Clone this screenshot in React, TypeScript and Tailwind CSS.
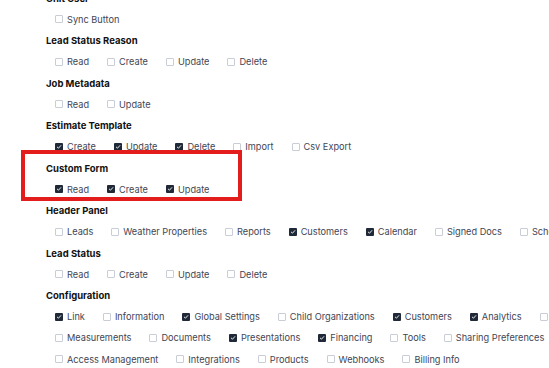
import React from "react";

type Item = [string, boolean];

const sections: { title: string; rows: Item[][] }[] = [
  { title: "Unit User", rows: [[["Sync Button", false]]] },
  {
    title: "Lead Status Reason",
    rows: [[["Read", false], ["Create", false], ["Update", false], ["Delete", false]]],
  },
  { title: "Job Metadata", rows: [[["Read", false], ["Update", false]]] },
  {
    title: "Estimate Template",
    rows: [[["Create", true], ["Update", true], ["Delete", true], ["Import", false], ["Csv Export", false]]],
  },
  { title: "Custom Form", rows: [[["Read", true], ["Create", true], ["Update", true]]] },
  {
    title: "Header Panel",
    rows: [
      [
        ["Leads", false],
        ["Weather Properties", false],
        ["Reports", false],
        ["Customers", true],
        ["Calendar", true],
        ["Signed Docs", false],
        ["Schedule", false],
      ],
    ],
  },
  {
    title: "Lead Status",
    rows: [[["Read", false], ["Create", false], ["Update", false], ["Delete", false]]],
  },
  {
    title: "Configuration",
    rows: [
      [
        ["Link", true],
        ["Information", false],
        ["Global Settings", true],
        ["Child Organizations", false],
        ["Customers", true],
        ["Analytics", true],
        ["Users", false],
      ],
      [
        ["Measurements", false],
        ["Documents", false],
        ["Presentations", true],
        ["Financing", true],
        ["Tools", false],
        ["Sharing Preferences", false],
      ],
      [
        ["Access Management", false],
        ["Integrations", false],
        ["Products", false],
        ["Webhooks", false],
        ["Billing Info", false],
      ],
    ],
  },
];

function Box({ checked }: { checked: boolean }) {
  if (checked) {
    return (
      <span className="flex h-[8px] w-[8px] shrink-0 items-center justify-center rounded-[1px] bg-[#1f2937]">
        <svg width="6" height="6" viewBox="0 0 6 6" fill="none">
          <path d="M1.3 3.1 L2.5 4.2 L4.8 1.6" stroke="#ffffff" strokeWidth="0.9" strokeLinecap="round" strokeLinejoin="round" />
        </svg>
      </span>
    );
  }
  return <span className="h-[8px] w-[8px] shrink-0 rounded-[1px] border border-[#c9ced6] bg-white" />;
}

export default function App() {
  return (
    <div
      className="relative h-[368px] w-[549px] overflow-hidden bg-white"
      style={{ fontFamily: "Inter, 'Noto Sans', sans-serif" }}
    >
      <div className="mt-[-10.5px] flex flex-col gap-[2.1px] pl-[46px]">
        {sections.map((s) => (
          <div key={s.title} className="flex flex-col">
            <div className="flex h-[19px] items-center whitespace-nowrap text-[9.5px] font-bold text-[#111111]">
              {s.title}
            </div>
            {s.rows.map((row, i) => (
              <div key={i} className="flex h-[21.4px] items-center gap-x-[18px] whitespace-nowrap pl-[9px]">
                {row.map(([label, checked], j) => (
                  <div key={j} className="flex shrink-0 items-center gap-[4px]">
                    <Box checked={checked} />
                    <span className="text-[9.2px] leading-none text-[#3f4654]">{label}</span>
                  </div>
                ))}
              </div>
            ))}
          </div>
        ))}
      </div>
      <div className="absolute left-[21px] top-[150px] h-[51px] w-[221px] border-4 border-[#e31c1c]" />
    </div>
  );
}
